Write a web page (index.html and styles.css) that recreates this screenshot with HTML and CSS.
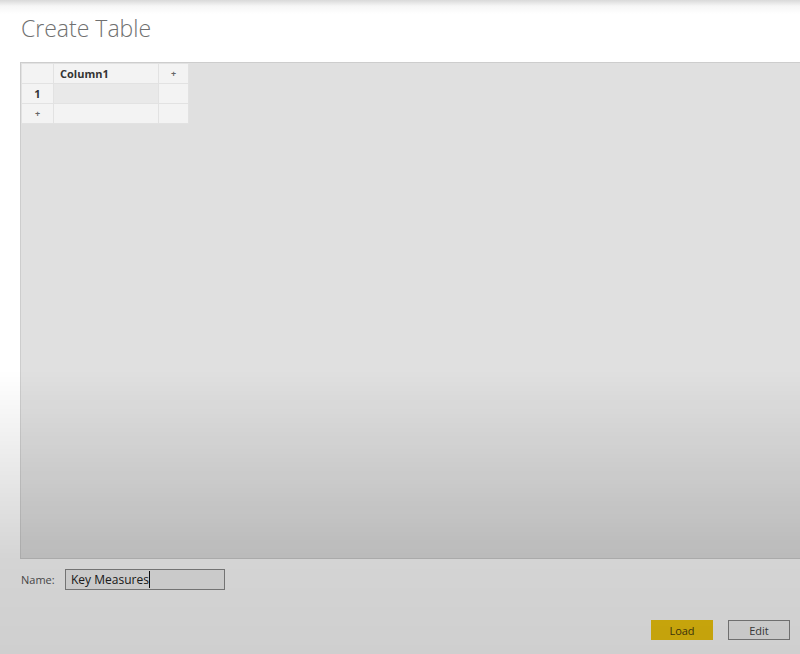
FILE: index.html
```html
<!DOCTYPE html>
<html lang="en">
<head>
    <meta charset="UTF-8">
    <title>Create Table</title>
    <link rel="stylesheet" href="styles.css">
</head>
<body>
    <div class="dialog">
        <h1 class="title">Create Table</h1>

        <div class="grid">
            <table class="sheet">
                <tr>
                    <th class="corner"></th>
                    <th class="col-head">Column1</th>
                    <th class="add-col">+</th>
                </tr>
                <tr>
                    <td class="row-head">1</td>
                    <td class="cell selected"></td>
                    <td class="cell blank"></td>
                </tr>
                <tr>
                    <td class="row-head add-row">+</td>
                    <td class="cell"></td>
                    <td class="cell blank"></td>
                </tr>
            </table>
        </div>

        <div class="name-row">
            <label class="name-label">Name:</label>
            <div class="name-input"><span class="caret">Key Measures</span></div>
        </div>

        <div class="actions">
            <button class="btn btn-load">Load</button>
            <button class="btn btn-edit">Edit</button>
        </div>
    </div>
    <div class="fade"></div>
</body>
</html>
```

FILE: styles.css
```css
* {
    margin: 0;
    padding: 0;
    box-sizing: border-box;
}

body {
    background: #fff;
    font-family: "Open Sans", "Noto Sans", sans-serif;
    color: #444;
    height: 654px;
    overflow: hidden;
}

.dialog {
    padding: 12px 0 0 20px;
    height: 654px;
    background: linear-gradient(to bottom, #d9d9d9 0, #f6f6f6 6px, #fff 14px);
}

.title {
    font-weight: 300;
    font-size: 23px;
    color: #707070;
    line-height: 32px;
    padding-left: 1px;
    height: 50px;
}

.grid {
    height: 497px;
    background: #e0e0e0;
    border: 1px solid #cdcdcd;
    border-right: none;
}

.sheet {
    border-collapse: collapse;
    font-size: 11px;
}

.sheet th,
.sheet td {
    height: 20px;
    border: 1px solid #e2e2e2;
    background: #f3f3f3;
    color: #333;
    text-align: center;
}

.corner {
    width: 32px;
}

.col-head {
    width: 105px;
    text-align: left !important;
    padding-left: 6px;
    font-weight: 700;
}

.add-col {
    width: 30px;
    font-weight: 700;
    color: #666 !important;
    font-size: 9px;
}

.row-head {
    font-weight: 700;
}

.add-row {
    font-weight: 700;
    font-size: 9px;
    color: #666 !important;
}

.sheet .selected {
    background: #e9e9e9;
}

.name-row {
    display: flex;
    align-items: center;
    margin-top: 10px;
    height: 21px;
}

.name-label {
    font-size: 11px;
    color: #555;
    width: 45px;
    padding-left: 1px;
}

.name-input {
    width: 160px;
    height: 21px;
    border: 1px solid #8c8c8c;
    background: #f4f4f4;
    font-size: 12px;
    color: #222;
    padding-left: 5px;
    line-height: 19px;
}

.caret {
    border-right: 1px solid #111;
}

.actions {
    display: flex;
    justify-content: flex-end;
    gap: 15px;
    margin-top: 30px;
    padding-right: 10px;
}

.btn {
    width: 62px;
    height: 20px;
    font-family: "Open Sans", "Noto Sans", sans-serif;
    font-size: 11px;
    color: #444;
    border: 1px solid #888;
    background: #f6f6f6;
}

.btn-load {
    background: #f2c80f;
    border-color: #f2c80f;
    color: #4a3f10;
}

.fade {
    position: fixed;
    inset: 0;
    pointer-events: none;
    background: linear-gradient(to bottom, rgba(0, 0, 0, 0) 370px, rgba(0, 0, 0, 0.05) 430px, rgba(0, 0, 0, 0.17) 560px, rgba(0, 0, 0, 0.19) 654px);
}
```
